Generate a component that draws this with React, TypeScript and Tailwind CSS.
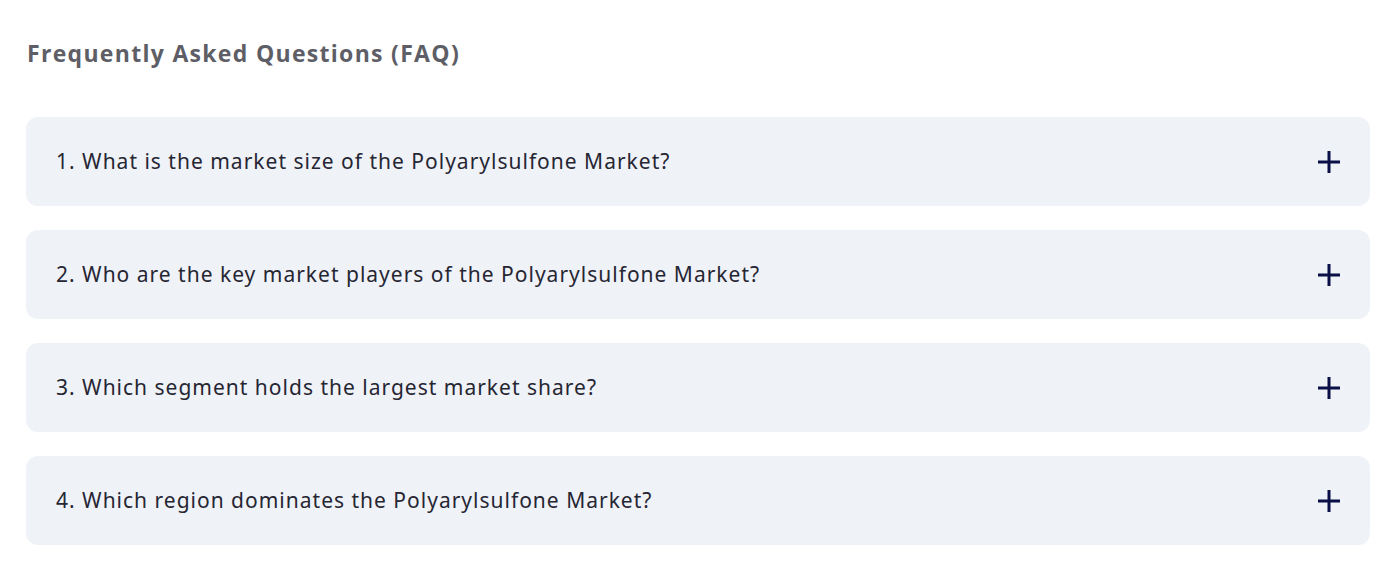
const questions = [
	"1. What is the market size of the Polyarylsulfone Market?",
	"2. Who are the key market players of the Polyarylsulfone Market?",
	"3. Which segment holds the largest market share?",
	"4. Which region dominates the Polyarylsulfone Market?",
];

function PlusIcon() {
	return (
		<svg width="22" height="22" viewBox="0 0 22 22" className="shrink-0">
			<path d="M11 0V22M0 11H22" stroke="#0b0f48" strokeWidth="3" />
		</svg>
	);
}

export default function App() {
	return (
		<div className="bg-white px-[26px] pt-[38px] pb-[35px] w-[1396px]">
			<h2 className="font-['Open_Sans',sans-serif] text-[23px] font-bold text-[#5e5e66] leading-[30px] tracking-[1.3px] pl-px">
				Frequently Asked Questions (FAQ)
			</h2>
			<div className="mt-[49px] flex flex-col gap-[24px]">
				{questions.map((q) => (
					<div
						key={q}
						className="h-[89px] rounded-[12px] bg-[#eff2f7] flex items-center justify-between pl-[30px] pr-[30px]"
					>
						<p className="font-['Noto_Sans',sans-serif] text-[21px] tracking-[1px] text-[#262633]">
							{q}
						</p>
						<PlusIcon />
					</div>
				))}
			</div>
		</div>
	);
}
